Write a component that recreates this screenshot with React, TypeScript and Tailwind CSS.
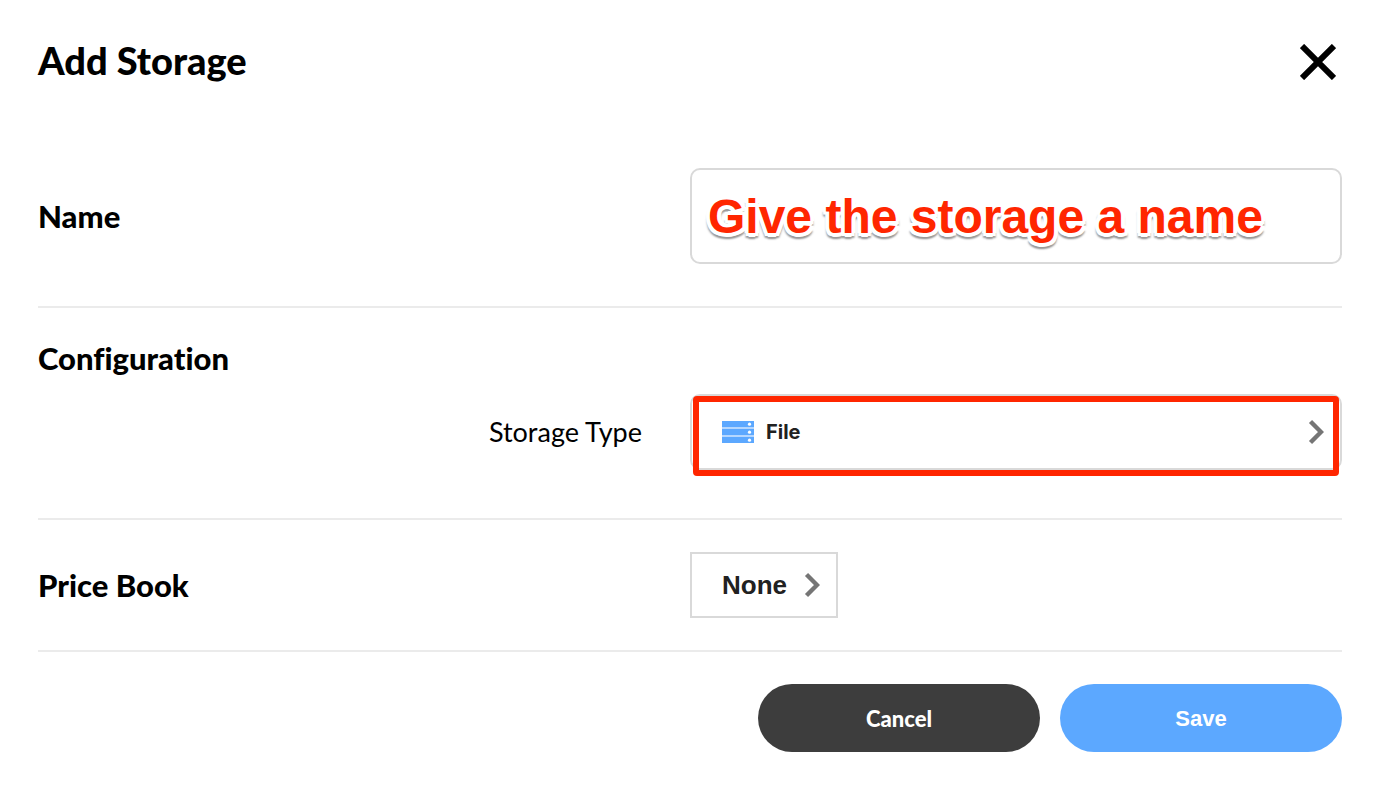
import { useState } from "react";

function Chevron() {
  return (
    <svg width="16" height="26" viewBox="0 0 16 26" fill="none" aria-hidden>
      <path d="M2.5 2.5 13 13 2.5 23.5" stroke="#757575" strokeWidth="4.4" />
    </svg>
  );
}

function StorageIcon() {
  return (
    <svg width="32" height="24" viewBox="0 0 32 24" aria-hidden>
      <rect y="1" width="32" height="22" fill="#b5d7ff" />
      {[1, 9, 17].map((y) => (
        <g key={y}>
          <rect y={y} width="32" height="6" fill="#5ca8ff" />
          <circle cx="27.5" cy={y + 3.2} r="1.6" fill="#fff" />
        </g>
      ))}
    </svg>
  );
}

export default function App() {
  const [name, setName] = useState("Give the storage a name");

  return (
    <form
      className="bg-white pt-8 pr-10 pb-11 pl-[38px] font-['Lato',sans-serif] text-black [font-variant-ligatures:none]"
      onSubmit={(e) => e.preventDefault()}
    >
      <header className="flex h-[60px] items-center justify-between">
        <h1 className="pb-1 text-[38px] leading-14 font-black">Add Storage</h1>
        <button type="button" aria-label="Close" className="mr-1.5">
          <svg width="36" height="36" viewBox="0 0 36 36" fill="none" aria-hidden>
            <path d="M2 2 34 34M34 2 2 34" stroke="#000" strokeWidth="6" />
          </svg>
        </button>
      </header>

      <div className="mt-[76px] grid grid-cols-2 items-center border-b-2 border-[#ebebeb] pb-[42px]">
        <label htmlFor="name" className="text-[31px] font-black">
          Name
        </label>
        <textarea
          id="name"
          rows={1}
          value={name}
          onChange={(e) => setName(e.target.value)}
          className="block h-24 w-full min-w-0 resize-none overflow-hidden rounded-[10px] border-2 border-[#d9d9d9] px-4 font-['Liberation_Sans',sans-serif] text-5xl leading-[94px] font-bold text-[#ff2600] outline-none [text-shadow:4px_0_#fff,3px_3px_#fff,0_4px_#fff,-3px_3px_#fff,-4px_0_#fff,-3px_-3px_#fff,0_-4px_#fff,3px_-3px_#fff,0_6px_2px_#999,3px_5px_2px_#999,-3px_5px_2px_#999]"
        />
      </div>

      <section className="border-b-2 border-[#ebebeb] pt-8 pb-12">
        <h2 className="text-[31px] leading-9 font-black">Configuration</h2>
        <div className="mt-[18px] grid grid-cols-2 items-center">
          <span id="storage-type" className="pr-12 text-right text-[27px]">
            Storage Type
          </span>
          <div className="relative">
            <button
              type="button"
              aria-labelledby="storage-type storage-value"
              className="flex h-19 w-full items-center rounded-[10px] border-2 border-[#d9d9d9] pr-4 pl-[30px]"
            >
              <StorageIcon />
              <span
                id="storage-value"
                className="ml-3 flex-1 text-left font-['Inter',sans-serif] text-xl font-bold text-[#212121]"
              >
                File
              </span>
              <Chevron />
            </button>
            {/* highlight around the picker */}
            <div className="pointer-events-none absolute inset-x-[3px] top-0.5 -bottom-1.5 rounded-sm border-6 border-[#ff2600]" />
          </div>
        </div>
      </section>

      <div className="grid grid-cols-2 items-center border-b-2 border-[#ebebeb] py-8">
        <span id="price-book" className="text-[31px] font-black">
          Price Book
        </span>
        <button
          type="button"
          aria-labelledby="price-book price-value"
          className="flex h-[66px] items-center gap-[17px] justify-self-start border-2 border-[#d9d9d9] pr-4 pl-[30px]"
        >
          <span
            id="price-value"
            className="font-['Liberation_Sans',sans-serif] text-[26px] font-bold text-[#212121]"
          >
            None
          </span>
          <Chevron />
        </button>
      </div>

      <footer className="mt-8 flex justify-end gap-5 text-white">
        <button
          type="button"
          className="h-17 w-[282px] rounded-full bg-[#3d3d3d] text-[22px] font-black"
        >
          Cancel
        </button>
        <button
          type="submit"
          className="h-17 w-[282px] rounded-full bg-[#5ca8ff] font-['Liberation_Sans',sans-serif] text-[22px] font-bold"
        >
          Save
        </button>
      </footer>
    </form>
  );
}
